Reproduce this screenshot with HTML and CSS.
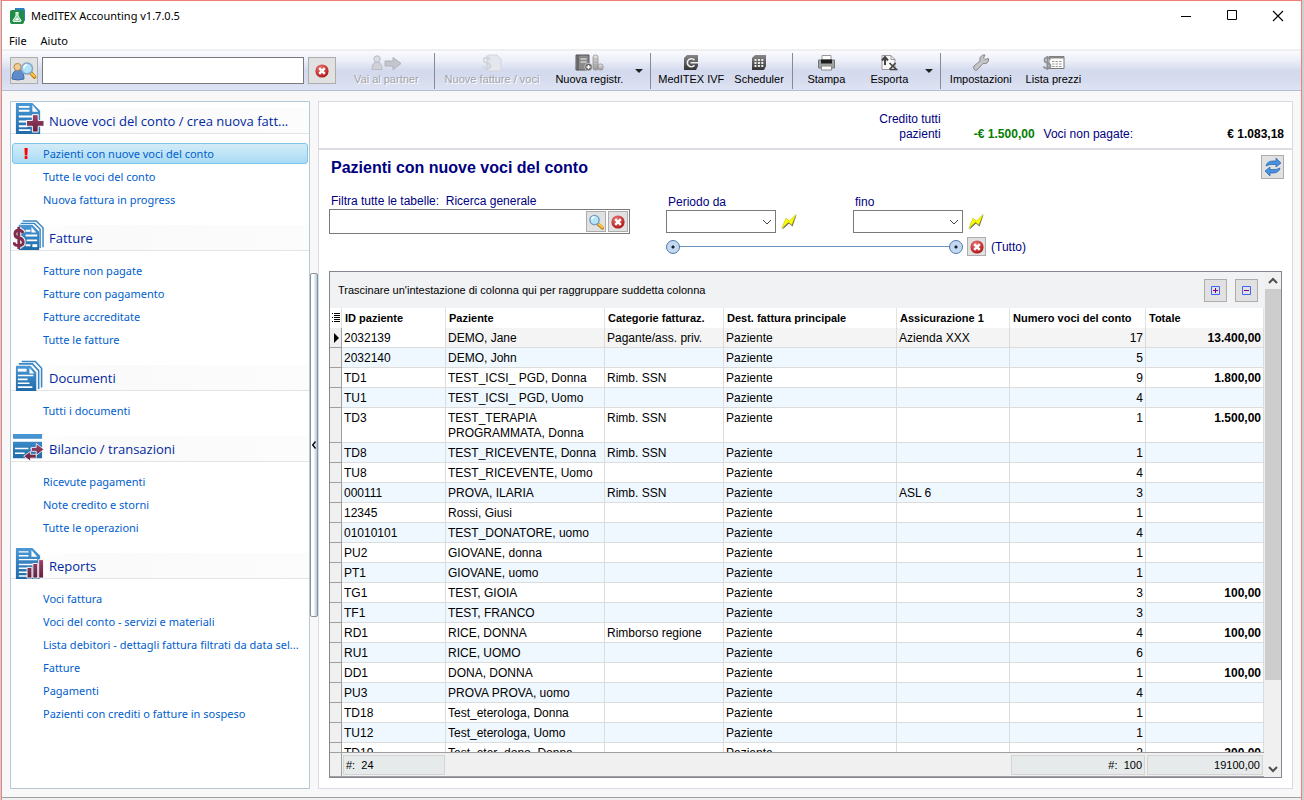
FILE: index.html
```html
<!DOCTYPE html>
<html lang="it">
<head>
  <meta charset="UTF-8">
  <meta name="viewport" content="width=device-width, initial-scale=1.0">
  <title>MedITEX Accounting v1.7.0.5</title>
  <link rel="stylesheet" href="styles.css">
</head>
<body>
  <!-- shared icons -->
  <svg class="defs" aria-hidden="true">
    <defs>
      <linearGradient id="blue" x1="0" y1="0" x2="0" y2="1"><stop offset="0" stop-color="#4a98d6"/><stop offset="1" stop-color="#1f6aa8"/></linearGradient>
      <linearGradient id="wine" x1="0" y1="0" x2="0" y2="1"><stop offset="0" stop-color="#9c4468"/><stop offset="1" stop-color="#641f3c"/></linearGradient>
      <linearGradient id="grey" x1="0" y1="0" x2="0" y2="1"><stop offset="0" stop-color="#888"/><stop offset="1" stop-color="#333"/></linearGradient>
      <linearGradient id="silver" x1="0" y1="0" x2="0" y2="1"><stop offset="0" stop-color="#e8e8e8"/><stop offset="1" stop-color="#999"/></linearGradient>
      <radialGradient id="red" cx=".4" cy=".3" r=".7"><stop offset="0" stop-color="#ee7878"/><stop offset="1" stop-color="#b01818"/></radialGradient>
    </defs>
    <symbol id="i-clear" viewBox="0 0 14 14">
      <circle cx="7" cy="7" r="6.6" fill="url(#red)"/>
      <path d="M4.2 4.2l5.6 5.6M9.8 4.2l-5.6 5.6" stroke="#fff" stroke-width="2.4"/>
    </symbol>
    <symbol id="i-find" viewBox="0 0 16 16">
      <path d="M10 10l4.500 4" stroke="#b87818" stroke-width="3.200" stroke-linecap="round"/>
      <path d="M10.500 10l4 3.500" stroke="#ffc840" stroke-width="2" stroke-linecap="round"/>
      <circle cx="6.500" cy="6" r="4.600" fill="#b4e6fa" stroke="#7898c0" stroke-width="1.400"/>
      <path d="M3.500 5.500a3 3 0 0 1 3-2.500" stroke="#fff" stroke-width="1.400" fill="none"/>
    </symbol>
    <symbol id="i-bolt" viewBox="0 0 16 16">
      <path d="M1.500 15.500L6 5l3 3 6.500-7-4 11.500-3.500-3z" fill="#666"/>
      <path d="M.8 14.500L5 4l3.200 3L15 .5l-4.200 10.500-3.300-2.800z" fill="#ff0" stroke="#b4b400" stroke-width=".5"/>
    </symbol>
    <symbol id="i-chevron" viewBox="0 0 10 6"><path d="M1 1l4 4 4-4" fill="none" stroke="#444"/></symbol>
    <symbol id="i-drop" viewBox="0 0 8 4"><path d="M0 0h8L4 4z" fill="#222"/></symbol>
  </svg>

  <div class="window">
    <header class="title-bar">
      <svg class="app-icon" viewBox="0 0 16 16"><path d="M5 0h9l1 2v11H5z" fill="#2f7fc0"/><rect y="2" width="14" height="14" rx="2" fill="#1f8c48"/><path d="M5.500 4.500h3M6 5v3l-3 4.500q0 1 1 1h6q1 0 1-1L8 8V5" fill="#8fd0a4" stroke="#fff"/><path d="M5 12l2-2.500L9 12z" fill="#fff"/></svg>
      <span class="app-name">MedITEX Accounting v1.7.0.5</span>
      <button class="win-btn" aria-label="Riduci a icona"><svg viewBox="0 0 12 12"><path d="M1 6.500h10" stroke="#000"/></svg></button>
      <button class="win-btn" aria-label="Ingrandisci"><svg viewBox="0 0 12 12"><path d="M1.500.5h9v9h-9z" fill="none" stroke="#000"/></svg></button>
      <button class="win-btn" aria-label="Chiudi"><svg viewBox="0 0 12 12"><path d="M1 1l10 10M11 1L1 11" stroke="#000" stroke-width="1.100"/></svg></button>
    </header>

    <nav class="menu-bar">
      <button>File</button>
      <button>Aiuto</button>
    </nav>

    <div class="toolbar">
      <button class="icon-btn big" aria-label="Cerca paziente">
        <svg class="person-find" viewBox="0 0 26 20"><path d="M1 18q0-9 6-9t6 9q-6 2-12 0z" fill="#5e8ccc" stroke="#3c68a8"/><circle cx="6.500" cy="6" r="3.600" fill="#f2cc94" stroke="#b08850"/><path d="M20 12l3.500 4" stroke="#b87818" stroke-width="3.600" stroke-linecap="round"/><path d="M20.500 12.500l3 3" stroke="#ffc840" stroke-width="2" stroke-linecap="round"/><circle cx="16" cy="7.500" r="5.500" fill="#b4e4fa" stroke="#88a8cc" stroke-width="1.600"/><path d="M13 7a3 3 0 0 1 3-3" stroke="#fff" stroke-width="1.500" fill="none"/></svg>
      </button>
      <input class="quick-search" type="text" aria-label="Ricerca rapida">
      <button class="icon-btn big" aria-label="Cancella ricerca"><svg class="i14"><use href="#i-clear"/></svg></button>

      <button class="tool partner" disabled>
        <svg viewBox="0 0 32 18"><path d="M2 15.500q0-7.500 5-7.500t5 7.500z" fill="#d0d1d6" stroke="#babcc4"/><circle cx="7" cy="5" r="3.200" fill="#dcdde2" stroke="#babcc4"/><path d="M15 7h8V3.500l8 6-8 6V12h-8z" fill="#c4c6cc" stroke="#b0b2ba"/></svg>
        Vai al partner
      </button>
      <span class="sep"></span>
      <button class="tool" disabled>
        <svg viewBox="0 0 32 18"><path d="M12 1h9l4 4v12H12z" fill="#e6e7ee" stroke="#d2d4de"/><path d="M14.500 5.500q-1-2-4-2-3 0-3 2.500t3.500 3 3.500 3q0 2.500-3.500 2.500-3 0-4-2M11 1.500v15" fill="none" stroke="#d0d2da" stroke-width="1.400"/></svg>
        Nuove fatture / voci
      </button>
      <button class="tool">
        <svg viewBox="0 0 32 18"><path d="M3 1h13v15H3z" fill="#8a8a8a" stroke="#555"/><path d="M5 1v15" stroke="#444"/><path d="M7.500 5h6M7.500 8h6" stroke="#d4d4d4" stroke-width="1.500"/><rect x="20" y="1" width="5" height="15" rx="2" fill="url(#silver)" stroke="#888" stroke-width=".7"/><path d="M20 5h5M20 8h5M20 11h5" stroke="#aaa"/><rect x="25" y="10" width="5" height="6" rx="2" fill="url(#silver)" stroke="#888" stroke-width=".7"/><circle cx="15.500" cy="13" r="3.800" fill="#666" stroke="#ddd" stroke-width=".7"/><path d="M13.500 13h4M15.500 11v4" stroke="#fff" stroke-width="1.300"/></svg>
        Nuova registr.
      </button>
      <button class="drop" aria-label="Altre registrazioni"><svg><use href="#i-drop"/></svg></button>
      <span class="sep"></span>
      <button class="tool tight">
        <svg viewBox="0 0 32 18"><path d="M9 4l3-3h11v11l-2 4H9z" fill="url(#grey)"/><path d="M19.500 6.200a4 4 0 1 0 0 5M15.500 8.700h8" fill="none" stroke="#eee" stroke-width="1.600"/></svg>
        MedITEX IVF
      </button>
      <button class="tool tight">
        <svg viewBox="0 0 32 18"><path d="M9 4l3-3h11v11l-2 4H9z" fill="url(#grey)"/><path d="M11.500 6h9M11.500 9h9M11.500 12h9" stroke="#eee" stroke-width="2" stroke-dasharray="2 1.400"/></svg>
        Scheduler
      </button>
      <span class="sep"></span>
      <button class="tool short">
        <svg viewBox="0 0 32 18"><path d="M12 1.500h9v5h-9z" fill="#fff" stroke="#999"/><path d="M8.500 6h16v8h-16z" fill="#a4a4a4" stroke="#777"/><path d="M11 5.500h11v4H11z" fill="#1e1e1e"/><path d="M11.500 12h10v4h-10z" fill="#fff" stroke="#888"/></svg>
        Stampa
      </button>
      <button class="tool short">
        <svg viewBox="0 0 32 18"><path d="M9 1.500h9l4 4v10H9z" fill="#f8f8f8" stroke="#999"/><path d="M18 1.500v4h4" fill="none" stroke="#999"/><path d="M12 11V4M9 6.500L12 3l3 3.500" fill="none" stroke="#444" stroke-width="2"/><path d="M16.500 9l7 6.500M22.500 9l-6 6.500M17 15.500h7.500" stroke="#444" stroke-width="1.700"/></svg>
        Esporta
      </button>
      <button class="drop" aria-label="Altri formati"><svg><use href="#i-drop"/></svg></button>
      <span class="sep"></span>
      <button class="tool snug">
        <svg viewBox="0 0 32 18"><path d="M9 12l6-5q-1-4 2-5.500 2-1 3-.5l-1.500 3L20 5.500l3.500-1q.500 3-1.500 4.500-1.500 1-4 .5L12 16q-2 1-3-1t0-3z" fill="#c4c4c6" stroke="#88888c"/></svg>
        Impostazioni
      </button>
      <button class="tool snug">
        <svg viewBox="0 0 32 18"><path d="M12 2.500h15v12H12z" fill="#fff" stroke="#777"/><path d="M12 3.500h15" stroke="#888" stroke-width="2"/><path d="M15 7.500h10M15 10h10M15 12.500h10" stroke="#999" stroke-dasharray="2.500 1"/><path d="M13.500 5.500q-1-2-3.500-2t-2.500 2.500 3 3 3 3-3 2.500-4-2M10.300 2v14" fill="none" stroke="#909094" stroke-width="1.700"/></svg>
        Lista prezzi
      </button>
    </div>

    <div class="workspace">
      <aside class="sidebar">
        <section>
          <h2>
            <svg viewBox="0 0 32 32"><path d="M3 0h17l8 8v24H3z" fill="url(#blue)"/><path d="M20 2v7h6z" fill="#fff"/><path d="M6 4h11M6 8h11M6 14h18M6 19h10M6 24h9M6 28h12" stroke="#fff" stroke-width="2"/><path d="M20 12h6v6h6v6h-6v6h-6v-6h-6v-6h6z" fill="url(#wine)" stroke="#fff" stroke-width="1"/></svg>
            Nuove voci del conto / crea nuova fatt...
          </h2>
          <ul>
            <li class="active"><span class="alert">!</span><a href="#">Pazienti con nuove voci del conto</a></li>
            <li><a href="#">Tutte le voci del conto</a></li>
            <li><a href="#">Nuova fattura in progress</a></li>
          </ul>
        </section>
        <section>
          <h2>
            <svg viewBox="0 0 32 32"><path d="M10 1h14l7 7v20M8 3.500h14l6 6V29" fill="none" stroke="#3a86c4" stroke-width="1.500"/><path d="M6 5h14l7 7v19H6z" fill="url(#blue)"/><path d="M19 7v6h5z" fill="#fff"/><path d="M13 11h5M13 16h12M14 21h11M13 26h5" stroke="#fff" stroke-width="2"/><path d="M20 25h5v3h-5z" fill="#fff"/><path d="M10.500 13.500q-1-3-4.500-3-4 0-4 4t4 4 4.500 4-4.500 4-5-3.500M6 7v23" fill="none" stroke="#fff" stroke-width="5"/><path d="M10.500 13.500q-1-3-4.500-3-4 0-4 4t4 4 4.500 4-4.500 4-5-3.500M6 7v23" fill="none" stroke="#822c4e" stroke-width="3"/></svg>
            Fatture
          </h2>
          <ul>
            <li><a href="#">Fatture non pagate</a></li>
            <li><a href="#">Fatture con pagamento</a></li>
            <li><a href="#">Fatture accreditate</a></li>
            <li><a href="#">Tutte le fatture</a></li>
          </ul>
        </section>
        <section>
          <h2>
            <svg viewBox="0 0 32 32"><path d="M9 1.500h14l6.500 7v20M6 4h14l6.500 7v19" fill="none" stroke="#3a86c4" stroke-width="1.600"/><path d="M3 6h15l6 7v19H3z" fill="url(#blue)"/><path d="M17 8v6h5z" fill="#fff"/><path d="M5 9h9v3H5z" fill="#fff"/><path d="M5 16h16M5 20h10M5 24h12M5 28h15" stroke="#fff" stroke-width="1.600"/></svg>
            Documenti
          </h2>
          <ul>
            <li><a href="#">Tutti i documenti</a></li>
          </ul>
        </section>
        <section>
          <h2>
            <svg viewBox="0 0 32 32"><path d="M0 3h30v5H0zM0 11h30v17H0z" fill="url(#blue)"/><path d="M2 18h14M2 23h10M18 18h4" stroke="#fff" stroke-width="1.600"/><path d="M19 17h5v-4l8 6-8 6v-4h-5zM24 24h-6v-3l-7 5 7 5v-3h6z" fill="url(#wine)" stroke="#fff" stroke-width=".8"/></svg>
            Bilancio / transazioni
          </h2>
          <ul>
            <li><a href="#">Ricevute pagamenti</a></li>
            <li><a href="#">Note credito e storni</a></li>
            <li><a href="#">Tutte le operazioni</a></li>
          </ul>
        </section>
        <section>
          <h2>
            <svg viewBox="0 0 32 32"><path d="M3 0h17l8 8v24H3z" fill="url(#blue)"/><path d="M19 2v7h6z" fill="#fff"/><path d="M6 4h10M6 8h10M6 12h19M6 17h18M6 21h11M6 25h9M6 29h9" stroke="#fff" stroke-width="1.500"/><path d="M14.500 20h5v11h-5zM20.500 16h5v15h-5zM26.500 12h5v19h-5z" fill="url(#wine)" stroke="#fff" stroke-width=".9"/></svg>
            Reports
          </h2>
          <ul>
            <li><a href="#">Voci fattura</a></li>
            <li><a href="#">Voci del conto - servizi e materiali</a></li>
            <li><a href="#">Lista debitori - dettagli fattura filtrati da data sel...</a></li>
            <li><a href="#">Fatture</a></li>
            <li><a href="#">Pagamenti</a></li>
            <li><a href="#">Pazienti con crediti o fatture in sospeso</a></li>
          </ul>
        </section>
      </aside>

      <div class="splitter">
        <button class="splitter-handle" aria-label="Nascondi menu"><svg viewBox="0 0 4 8"><path d="M3.500.5L.7 4l2.800 3.500" fill="none" stroke="#000" stroke-width="1.300"/></svg></button>
      </div>

      <main class="content">
        <div class="summary">
          <span class="summary-label">Credito tutti pazienti</span>
          <b class="credit">-€ 1.500,00</b>
          <span class="summary-unpaid">Voci non pagate:</span>
          <b class="debit">€ 1.083,18</b>
        </div>

        <div class="page-head">
          <h1>Pazienti con nuove voci del conto</h1>
          <button class="icon-btn refresh" aria-label="Aggiorna"><svg viewBox="0 0 18 18"><path d="M2 8q1-5 7-5h3V0l5 5-5 4V6.500H9Q5.500 6 2 8z" fill="#4a90dc" stroke="#2464b0" stroke-width=".7"/><path d="M16 10q-1 5-7 5H6v3l-5-5 5-4v2.500h3q3.500.5 7-1.500z" fill="#4a90dc" stroke="#2464b0" stroke-width=".7"/></svg></button>
        </div>

        <div class="filters">
          <div class="filter-search">
            <label for="search">Filtra tutte le tabelle:&nbsp; Ricerca generale</label>
            <div class="search-box">
              <input id="search" type="text">
              <button class="icon-btn" aria-label="Cerca"><svg class="i16"><use href="#i-find"/></svg></button>
              <button class="icon-btn" aria-label="Cancella"><svg class="i14"><use href="#i-clear"/></svg></button>
            </div>
          </div>
          <div class="filter-period">
            <div class="period-row">
              <div class="period-field">
                <label for="from">Periodo da</label>
                <div class="combo-row">
                  <div class="combo"><select id="from"><option></option></select><svg><use href="#i-chevron"/></svg></div>
                  <button class="bolt" aria-label="Imposta data iniziale"><svg class="i16"><use href="#i-bolt"/></svg></button>
                </div>
              </div>
              <div class="period-field">
                <label for="to">fino</label>
                <div class="combo-row">
                  <div class="combo"><select id="to"><option></option></select><svg><use href="#i-chevron"/></svg></div>
                  <button class="bolt" aria-label="Imposta data finale"><svg class="i16"><use href="#i-bolt"/></svg></button>
                </div>
              </div>
            </div>
            <div class="slider-row">
              <div class="slider">
                <input type="range" min="0" max="100" value="0" aria-label="Inizio periodo">
                <input type="range" min="0" max="100" value="100" aria-label="Fine periodo">
              </div>
              <button class="icon-btn small" aria-label="Azzera periodo"><svg class="i14"><use href="#i-clear"/></svg></button>
              <span class="all">(Tutto)</span>
            </div>
          </div>
        </div>

        <div class="grid">
          <div class="grid-main">
            <div class="group-panel">
              <span>Trascinare un'intestazione di colonna qui per raggruppare suddetta colonna</span>
              <button class="icon-btn" aria-label="Espandi tutto"><svg class="i11" viewBox="0 0 11 11"><path d="M1.500 1.500h8v8h-8z" fill="none" stroke="#3c64ff"/><path d="M3 5.500h5M5.500 3v5" stroke="#800080"/></svg></button>
              <button class="icon-btn" aria-label="Comprimi tutto"><svg class="i11" viewBox="0 0 11 11"><path d="M1.500 1.500h8v8h-8z" fill="none" stroke="#3c64ff"/><path d="M3 5.500h5" stroke="#800080"/></svg></button>
            </div>
            <div class="table-scroll">
              <table>
                <colgroup>
                  <col class="c-mark"><col class="c-id"><col class="c-name"><col class="c-cat"><col><col class="c-ins"><col class="c-num"><col class="c-tot">
                </colgroup>
                <thead>
                  <tr>
                    <th class="mark"><svg viewBox="0 0 8 10"><path d="M2 .5h6M2 2.500h6M2 4.500h6M2 6.500h6M2 8.500h6M0 .5h1M0 4.500h1M0 8.500h1" stroke="#000"/></svg></th>
                    <th>ID paziente</th><th>Paziente</th><th>Categorie fatturaz.</th><th>Dest. fattura principale</th><th>Assicurazione 1</th><th>Numero voci del conto</th><th>Totale</th>
                  </tr>
                </thead>
                <tbody>
                  <tr class="current"><td class="mark"><svg viewBox="0 0 8 10"><path d="M2 0l5 5-5 5z"/></svg></td><td>2032139</td><td>DEMO, Jane</td><td>Pagante/ass. priv.</td><td>Paziente</td><td>Azienda XXX</td><td>17</td><td>13.400,00</td></tr>
                  <tr><td class="mark"></td><td>2032140</td><td>DEMO, John</td><td></td><td>Paziente</td><td></td><td>5</td><td></td></tr>
                  <tr><td class="mark"></td><td>TD1</td><td>TEST_ICSI_ PGD, Donna</td><td>Rimb. SSN</td><td>Paziente</td><td></td><td>9</td><td>1.800,00</td></tr>
                  <tr><td class="mark"></td><td>TU1</td><td>TEST_ICSI_ PGD, Uomo</td><td></td><td>Paziente</td><td></td><td>4</td><td></td></tr>
                  <tr><td class="mark"></td><td>TD3</td><td>TEST_TERAPIA PROGRAMMATA, Donna</td><td>Rimb. SSN</td><td>Paziente</td><td></td><td>1</td><td>1.500,00</td></tr>
                  <tr><td class="mark"></td><td>TD8</td><td>TEST_RICEVENTE, Donna</td><td>Rimb. SSN</td><td>Paziente</td><td></td><td>1</td><td></td></tr>
                  <tr><td class="mark"></td><td>TU8</td><td>TEST_RICEVENTE, Uomo</td><td></td><td>Paziente</td><td></td><td>4</td><td></td></tr>
                  <tr><td class="mark"></td><td>000111</td><td>PROVA, ILARIA</td><td>Rimb. SSN</td><td>Paziente</td><td>ASL 6</td><td>3</td><td></td></tr>
                  <tr><td class="mark"></td><td>12345</td><td>Rossi, Giusi</td><td></td><td>Paziente</td><td></td><td>1</td><td></td></tr>
                  <tr><td class="mark"></td><td>01010101</td><td>TEST_DONATORE, uomo</td><td></td><td>Paziente</td><td></td><td>4</td><td></td></tr>
                  <tr><td class="mark"></td><td>PU2</td><td>GIOVANE, donna</td><td></td><td>Paziente</td><td></td><td>1</td><td></td></tr>
                  <tr><td class="mark"></td><td>PT1</td><td>GIOVANE, uomo</td><td></td><td>Paziente</td><td></td><td>1</td><td></td></tr>
                  <tr><td class="mark"></td><td>TG1</td><td>TEST, GIOIA</td><td></td><td>Paziente</td><td></td><td>3</td><td>100,00</td></tr>
                  <tr><td class="mark"></td><td>TF1</td><td>TEST, FRANCO</td><td></td><td>Paziente</td><td></td><td>3</td><td></td></tr>
                  <tr><td class="mark"></td><td>RD1</td><td>RICE, DONNA</td><td>Rimborso regione</td><td>Paziente</td><td></td><td>4</td><td>100,00</td></tr>
                  <tr><td class="mark"></td><td>RU1</td><td>RICE, UOMO</td><td></td><td>Paziente</td><td></td><td>6</td><td></td></tr>
                  <tr><td class="mark"></td><td>DD1</td><td>DONA, DONNA</td><td></td><td>Paziente</td><td></td><td>1</td><td>100,00</td></tr>
                  <tr><td class="mark"></td><td>PU3</td><td>PROVA PROVA, uomo</td><td></td><td>Paziente</td><td></td><td>4</td><td></td></tr>
                  <tr><td class="mark"></td><td>TD18</td><td>Test_eterologa, Donna</td><td></td><td>Paziente</td><td></td><td>1</td><td></td></tr>
                  <tr><td class="mark"></td><td>TU12</td><td>Test_eterologa, Uomo</td><td></td><td>Paziente</td><td></td><td>1</td><td></td></tr>
                  <tr><td class="mark"></td><td>TD19</td><td>Test_eter_dono, Donna</td><td></td><td>Paziente</td><td></td><td>2</td><td>200,00</td></tr>
                </tbody>
                <tfoot>
                  <tr><td class="mark"></td><td><span>#:&nbsp; 24</span></td><td></td><td></td><td></td><td></td><td><span>#:&nbsp; 100</span></td><td><span>19100,00</span></td></tr>
                </tfoot>
              </table>
            </div>
          </div>
          <div class="scrollbar">
            <button aria-label="Scorri su"><svg viewBox="0 0 10 8"><path d="M1 6l4-4 4 4" fill="none" stroke="#505050" stroke-width="2"/></svg></button>
            <div class="track"><div class="thumb"></div></div>
            <button aria-label="Scorri giù"><svg viewBox="0 0 10 8"><path d="M1 2l4 4 4-4" fill="none" stroke="#505050" stroke-width="2"/></svg></button>
          </div>
        </div>
      </main>
    </div>
    <footer class="status-bar"></footer>
  </div>
</body>
</html>
```

FILE: styles.css
```css
* { box-sizing: border-box; margin: 0; padding: 0; }
body {
  font-family: "Liberation Sans", Arial, sans-serif;
  font-size: 12px;
  line-height: 15px;
  color: #000;
  background: #ccd0d4;
  height: 100vh;
  overflow: hidden;
}
button, input, select { font: inherit; color: inherit; }
button { background: none; border: none; }
ul { list-style: none; }
svg { display: block; }
.defs { position: absolute; width: 0; height: 0; }
.i11 { width: 11px; height: 11px; }
.i14 { width: 14px; height: 14px; }
.i16 { width: 16px; height: 16px; }

.window {
  height: 100vh;
  margin: 0 2px 0 1px;
  border: 1px solid #f08078;
  border-bottom: none;
  background: #f8f8f8;
  display: flex;
  flex-direction: column;
}

/* title and menu */
.title-bar {
  flex: none;
  display: flex;
  align-items: center;
  height: 30px;
  padding-left: 8px;
  background: #fff;
  font-family: "Noto Sans", "Open Sans", sans-serif;
}
.app-icon { width: 16px; height: 16px; }
.app-name { flex: 1; padding: 0 0 2px 5px; font-size: 11px; }
.win-btn {
  width: 46px;
  height: 28px;
  display: flex;
  align-items: center;
  justify-content: center;
}
.win-btn svg { width: 12px; height: 12px; }
.menu-bar {
  flex: none;
  display: flex;
  height: 18px;
  gap: 14px;
  padding-left: 7px;
  background: #fff;
  font-family: "Noto Sans", "Open Sans", sans-serif;
  font-size: 11px;
}

/* toolbar */
.toolbar {
  flex: none;
  display: flex;
  align-items: center;
  height: 42px;
  padding-left: 8px;
  border-top: 2px solid #efeff0;
  border-bottom: 1px solid #b5bdd5;
  background: linear-gradient(#fbfbfe, #eceff9 25%, #d4daed 50%, #d6dcee 75%, #dfe4f4);
}
.icon-btn {
  flex: none;
  width: 20px;
  height: 21px;
  display: flex;
  align-items: center;
  justify-content: center;
  background: #e1e1e1;
  border: 1px solid #adadad;
}
.icon-btn.big { width: 28px; height: 27px; }
.icon-btn.small { width: 19px; height: 19px; }
.person-find { width: 26px; height: 20px; }
.quick-search {
  width: 262px;
  height: 27px;
  margin: 0 4px;
  padding: 0 4px;
  background: #fff;
  border: 1px solid #7a7a7a;
}
.tool {
  display: flex;
  flex-direction: column;
  align-items: center;
  padding: 0 8px 2px;
  font-size: 11px;
  line-height: 14px;
  white-space: nowrap;
}
.tool svg { width: 32px; height: 18px; }
.tool:disabled { color: #a2a4aa; text-shadow: 1px 1px #fff; }
.tool.partner { padding: 0 12px 2px 18px; }
.tool.tight { padding: 0 5px 2px; }
.tool.snug { padding: 0 7px 2px; }
.tool.short { width: 63px; }
.sep {
  width: 1px;
  height: 36px;
  margin: 0 2px 0 3px;
  background: #858a96;
}
.drop {
  width: 16px;
  height: 36px;
  display: flex;
  align-items: center;
  justify-content: center;
}
.drop svg { width: 8px; height: 4px; }

.workspace {
  flex: 1;
  min-height: 0;
  display: flex;
  padding: 10px 8px 8px;
}
.status-bar {
  flex: none;
  height: 3px;
  border-top: 1px solid #a0a0a0;
  background: #f0f0f0;
}

/* sidebar */
.sidebar {
  flex: none;
  width: 300px;
  padding-top: 6px;
  background: #fff;
  border: 1px solid #b4c8d7;
  overflow: hidden;
  font-family: "Noto Sans", "Open Sans", sans-serif;
  font-size: 11px;
}
.sidebar h2 {
  position: relative;
  height: 26px;
  padding-left: 38px;
  font-family: "Open Sans", "Noto Sans", sans-serif;
  font-size: 13px;
  font-weight: 400;
  line-height: 26px;
  color: #00289e;
  white-space: nowrap;
  background: linear-gradient(90deg, #fff, #fafafa 30%, #fcfcfc);
  border-bottom: 1px solid #e4e4e4;
}
.sidebar h2 svg {
  position: absolute;
  left: 2px;
  bottom: -1px;
  width: 31px;
  height: 31px;
}
.sidebar ul { padding: 8px 1px 14px; }
.sidebar li {
  position: relative;
  height: 23px;
  padding-left: 31px;
  line-height: 23px;
  white-space: nowrap;
}
.sidebar a { color: #0060cc; text-decoration: none; }
.sidebar li.active {
  height: 21px;
  margin: 1px 0;
  line-height: 19px;
  padding-left: 30px;
  background: linear-gradient(#d3ebf6, #bfe4f7 50%, #a9dbf5);
  border: 1px solid #7cc4e8;
  border-radius: 3px;
}
.alert {
  position: absolute;
  left: 11px;
  top: -1px;
  color: #f00;
  font: 900 15px/21px "Open Sans", sans-serif;
}

.splitter {
  flex: none;
  width: 8px;
  display: flex;
  align-items: center;
}
.splitter-handle {
  width: 8px;
  height: 50%;
  display: flex;
  align-items: center;
  justify-content: center;
  background: linear-gradient(90deg, #fff 40%, #a8cbe0);
  border: 1px solid #8c9298;
  border-radius: 2px;
}
.splitter-handle svg { width: 4px; height: 8px; }

/* content */
.content {
  flex: 1;
  min-width: 0;
  display: flex;
  flex-direction: column;
  background: #fff;
  border: 1px solid #dadae4;
}
.summary {
  flex: none;
  display: flex;
  align-items: flex-end;
  justify-content: flex-end;
  height: 48px;
  padding: 0 8px 6px;
  border-bottom: 2px solid #dcdce4;
  color: #000080;
}
.summary-label { width: 66px; text-align: right; }
.credit { width: 94px; text-align: right; color: #008000; }
.summary-unpaid { margin-left: 9px; }
.debit { width: 151px; text-align: right; color: #000; }
.page-head {
  flex: none;
  display: flex;
  align-items: flex-start;
  justify-content: space-between;
  padding: 5px 8px 0 12px;
}
.page-head h1 {
  font-size: 16px;
  line-height: 26px;
  color: #000080;
}
.icon-btn.refresh { width: 23px; height: 24px; }
.refresh svg { width: 18px; height: 18px; }

.filters {
  flex: none;
  display: flex;
  gap: 36px;
  padding: 13px 10px 15px;
  color: #000080;
}
.filters label { display: block; padding-left: 2px; }
.search-box {
  display: flex;
  align-items: center;
  gap: 2px;
  width: 301px;
  height: 25px;
  padding-right: 1px;
  border: 1px solid #7a7a7a;
}
.search-box input {
  flex: 1;
  min-width: 0;
  padding: 0 4px;
  border: none;
  outline: none;
}
.period-row { display: flex; gap: 56px; }
.period-row label { line-height: 16px; }
.combo-row { display: flex; align-items: center; gap: 5px; }
.combo { position: relative; }
.combo select {
  display: block;
  width: 110px;
  height: 23px;
  appearance: none;
  background: #fff;
  border: 1px solid #7a7a7a;
  border-radius: 0;
}
.combo svg {
  position: absolute;
  right: 4px;
  top: 9px;
  width: 10px;
  height: 6px;
  pointer-events: none;
}
.slider-row {
  display: flex;
  align-items: center;
  padding-top: 4px;
}
.slider {
  position: relative;
  width: 297px;
  height: 19px;
  margin-right: 4px;
  background: linear-gradient(#6c93bf, #6c93bf) center / 280px 1px no-repeat;
}
.slider input {
  position: absolute;
  left: 0;
  top: 2px;
  width: 100%;
  height: 15px;
  appearance: none;
  background: none;
  pointer-events: none;
}
.slider input::-webkit-slider-thumb {
  appearance: none;
  width: 14px;
  height: 14px;
  border: 1px solid #4a79ab;
  border-radius: 50%;
  background: radial-gradient(circle, #123 1px, #c4d8f0 2px);
  pointer-events: auto;
}
.all { padding: 2px 0 0 5px; }

/* patients grid */
.grid {
  flex: 1;
  min-height: 0;
  display: flex;
  margin: 0 10px 10px;
  border: 1px solid #828790;
}
.grid-main {
  flex: 1;
  min-width: 0;
  display: flex;
  flex-direction: column;
}
.group-panel {
  flex: none;
  display: flex;
  align-items: center;
  gap: 8px;
  height: 36px;
  padding: 0 6px 0 8px;
  background: #f0f2f4;
  font-size: 11px;
}
.group-panel span { flex: 1; }
.group-panel .icon-btn { width: 23px; height: 23px; }
.table-scroll {
  flex: 1;
  overflow-y: auto;
  scrollbar-width: none;
}
table {
  width: 100%;
  table-layout: fixed;
  border-collapse: separate;
  border-spacing: 0;
}
.c-mark { width: 12px; }
.c-id { width: 104px; }
.c-name { width: 159px; }
.c-cat { width: 119px; }
.c-ins { width: 113px; }
.c-num { width: 136px; }
.c-tot { width: 118px; }
th {
  position: sticky;
  top: 0;
  height: 20px;
  padding: 0 3px;
  background: #fff;
  border-right: 1px solid #e2e2e2;
  font-size: 11px;
  text-align: left;
  white-space: nowrap;
}
td {
  height: 20px;
  padding: 3px 2px 1px;
  vertical-align: top;
  border-right: 1px solid #dcdcdc;
  border-bottom: 1px solid #dcdcdc;
}
tbody tr:nth-child(even) td { background: #eff7ff; }
tbody tr.current td { background: #f4f4f4; }
tbody tr.current td:nth-child(2) { background: #fff; }
td:nth-child(7), td:nth-child(8) { text-align: right; }
tbody td:nth-child(8) { font-weight: 700; }
th.mark { padding: 0 2px; }
td.mark, tbody tr td.mark, tbody tr.current td.mark {
  padding: 5px 2px 0;
  background: #f0f0f0;
  border-color: #a0a0a0;
}
.mark svg { width: 8px; height: 10px; }
tfoot td {
  position: sticky;
  bottom: 0;
  height: 25px;
  padding: 2px 1px 1px;
  background: #f0f0f0;
  border-top: 1px solid #a0a0a0;
  border-right: none;
  border-bottom: 1px solid #a0a0a0;
  font-size: 11px;
}
tfoot td.mark { border-right: 1px solid #a0a0a0; }
tfoot span {
  display: block;
  height: 20px;
  padding: 0 2px;
  line-height: 19px;
  background: #e6eaea;
  border: 1px solid #d4d4d4;
}
.scrollbar {
  flex: none;
  width: 17px;
  display: flex;
  flex-direction: column;
  background: #f0f0f0;
}
.scrollbar button {
  height: 17px;
  display: flex;
  align-items: center;
  justify-content: center;
}
.scrollbar svg { width: 10px; height: 8px; }
.track { flex: 1; padding-left: 1px; }
.thumb { height: 83%; background: #cdcdcd; }
```
